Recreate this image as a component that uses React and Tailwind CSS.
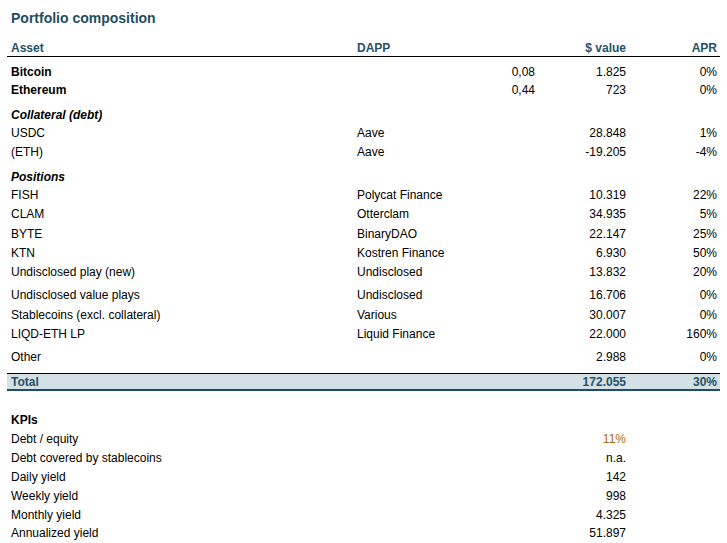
import React from 'react';

// Portfolio table rows
const rows = [
  { asset: 'Bitcoin', amount: '0,08', value: '1.825', apr: '0%', bold: true, mt: 'mt-[6px]' },
  { asset: 'Ethereum', amount: '0,44', value: '723', apr: '0%', bold: true, mt: 'mt-0' },
  { asset: 'Collateral (debt)', section: true, mt: 'mt-[7px]' },
  { asset: 'USDC', dapp: 'Aave', value: '28.848', apr: '1%', mt: 'mt-0' },
  { asset: '(ETH)', dapp: 'Aave', value: '-19.205', apr: '-4%', mt: 'mt-px' },
  { asset: 'Positions', section: true, mt: 'mt-[7px]' },
  { asset: 'FISH', dapp: 'Polycat Finance', value: '10.319', apr: '22%', mt: 'mt-0' },
  { asset: 'CLAM', dapp: 'Otterclam', value: '34.935', apr: '5%', mt: 'mt-px' },
  { asset: 'BYTE', dapp: 'BinaryDAO', value: '22.147', apr: '25%', mt: 'mt-[2px]' },
  { asset: 'KTN', dapp: 'Kostren Finance', value: '6.930', apr: '50%', mt: 'mt-px' },
  { asset: 'Undisclosed play (new)', dapp: 'Undisclosed', value: '13.832', apr: '20%', mt: 'mt-px' },
  { asset: 'Undisclosed value plays', dapp: 'Undisclosed', value: '16.706', apr: '0%', mt: 'mt-[5px]' },
  { asset: 'Stablecoins (excl. collateral)', dapp: 'Various', value: '30.007', apr: '0%', mt: 'mt-[2px]' },
  { asset: 'LIQD-ETH LP', dapp: 'Liquid Finance', value: '22.000', apr: '160%', mt: 'mt-px' },
  { asset: 'Other', value: '2.988', apr: '0%', mt: 'mt-[5px]' },
];

const kpis = [
  { label: 'Debt / equity', value: '11%', accent: true, mt: 'mt-px' },
  { label: 'Debt covered by stablecoins', value: 'n.a.', mt: 'mt-px' },
  { label: 'Daily yield', value: '142', mt: 'mt-px' },
  { label: 'Weekly yield', value: '998', mt: 'mt-px' },
  { label: 'Monthly yield', value: '4.325', mt: 'mt-px' },
  { label: 'Annualized yield', value: '51.897', mt: 'mt-0' },
];

const grid = 'grid grid-cols-[346px_100px_86px_91px_90px] items-center';

function App() {
  return (
    <div className="w-[727px] h-[543px] bg-white text-black text-[12px] leading-none overflow-hidden" style={{ fontFamily: '"Liberation Sans", Arial, sans-serif' }}>
      {/* Title */}
      <div className="pl-[11px] h-[36px] flex items-center">
        <h1 className="text-[14px] font-bold text-[#1f4e61]">Portfolio composition</h1>
      </div>

      <div className="ml-[7px] w-[713px]">
        {/* Header */}
        <div className={`${grid} h-[21px] pt-[4px] border-b border-black font-bold text-[#25506a]`}>
          <div className="pl-1">Asset</div>
          <div className="pl-1">DAPP</div>
          <div></div>
          <div className="text-right pr-1">$ value</div>
          <div className="text-right pr-[3px]">APR</div>
        </div>

        {/* Rows */}
        {rows.map((r) => (
          <div key={r.asset} className={`${grid} h-[18px] ${r.mt}`}>
            <div className={`pl-1 ${r.bold ? 'font-bold' : ''} ${r.section ? 'font-bold italic' : ''}`}>{r.asset}</div>
            <div className="pl-1">{r.dapp}</div>
            <div className="text-right pr-1">{r.amount}</div>
            <div className="text-right pr-1">{r.value}</div>
            <div className="text-right pr-[3px]">{r.apr}</div>
          </div>
        ))}

        {/* Total */}
        <div className={`${grid} mt-[7px] h-[18px] bg-[#d3e0e4] border-t border-black border-b-2 border-b-[#1f4e61] font-bold text-[#25506a]`}>
          <div className="pl-1">Total</div>
          <div></div>
          <div></div>
          <div className="text-right pr-1">172.055</div>
          <div className="text-right pr-[3px]">30%</div>
        </div>

        {/* KPIs */}
        <div className={`${grid} h-[18px] mt-[20px] font-bold`}>
          <div className="pl-1">KPIs</div>
        </div>
        {kpis.map((k) => (
          <div key={k.label} className={`${grid} h-[18px] ${k.mt}`}>
            <div className="pl-1">{k.label}</div>
            <div></div>
            <div></div>
            <div className={`text-right pr-1 ${k.accent ? 'text-[#b06a00]' : ''}`}>{k.value}</div>
            <div></div>
          </div>
        ))}
      </div>
    </div>
  );
}

export default App;
